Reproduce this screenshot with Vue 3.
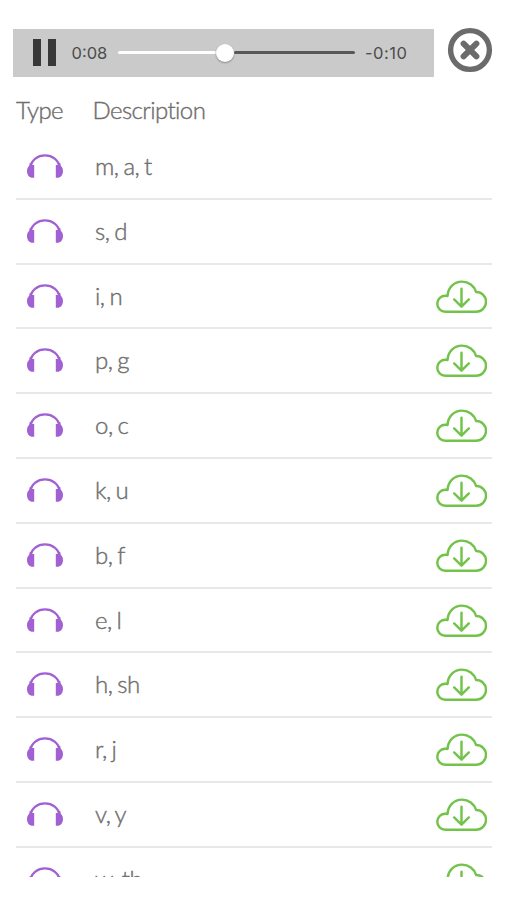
<script setup>
const rows = [
  ['m, a, t', false], ['s, d', false], ['i, n', true], ['p, g', true],
  ['o, c', true], ['k, u', true], ['b, f', true], ['e, l', true],
  ['h, sh', true], ['r, j', true], ['v, y', true], ['w, th', true],
].map(([label, download]) => ({ label, download }))
</script>

<template>
  <main class="screen">
    <header class="top">
      <div class="player">
        <div class="pause"><i></i><i></i></div>
        <span class="time">0:08</span>
        <div class="track"><div class="played"></div><div class="knob"></div><div class="rest"></div></div>
        <span class="time left">-0:10</span>
      </div>
      <svg class="close" viewBox="0 0 46 46">
        <circle cx="23" cy="23" r="19.4" fill="none" stroke="#6b6b6b" stroke-width="5.4" />
        <path d="M16.6 16.6 29.4 29.4M29.4 16.6 16.6 29.4" stroke="#6b6b6b" stroke-width="6" stroke-linecap="round" />
      </svg>
    </header>
    <div class="heads"><span class="type">Type</span><span class="desc">Description</span></div>
    <section class="list">
      <div v-for="row in rows" :key="row.label" class="row">
        <svg class="phones" viewBox="0 0 36 24">
          <path d="M3.500 13C4.500 6 10.500 1.400 18 1.400S31.500 6 32.500 13" fill="none" stroke="#a161d2" stroke-width="2.400" />
          <path d="M7.200 11V23.700H5.500C2.500 23.700 0 21 0 17.200c0-2.400.8-4.100 2.300-5.400l.4-2.800 2.300.3-.2 1.700zM28.800 11V23.700h1.700c3 0 5.500-2.700 5.500-6.500 0-2.400-.8-4.100-2.300-5.400l-.4-2.800-2.300.3.2 1.700z" fill="#a161d2" />
        </svg>
        <span class="label">{{ row.label }}</span>
        <svg v-if="row.download" class="cloud" viewBox="0 0 52 34">
          <path d="M9.500 32C4.800 32 1.300 28.500 1.300 24c0-4.800 4-8.500 8.800-8.200l1.700.1C12.200 7.500 18.500 1.300 26.500 1.300c6.700 0 12.500 4.300 14.500 10.700 5.500-.1 10 4.400 10 10S46.500 32 41 32z" />
          <path d="M26 8.500V26.500M18.500 19.500 26 26.800 33.500 19.500" />
        </svg>
      </div>
    </section>
  </main>
</template>

<style>
body { margin: 0; background: #fff; }
</style>
<style scoped>
.screen { box-sizing: border-box; width: 507px; height: 900px; padding-top: 27px; overflow: hidden; background: #fff; color: #6e6e6e; font: 300 24px/30px Lato, sans-serif; -webkit-text-stroke: .4px #6e6e6e; }
.top { display: flex; height: 50px; padding-left: 13px; -webkit-text-stroke: 0; }
.player { display: flex; align-items: center; width: 421px; height: 47.500px; margin-top: 2px; background: #cacaca; }
.pause { display: flex; gap: 7px; margin-left: 19.500px; width: 23px; height: 27px; }
.pause i { width: 8px; background: #383838; }
.time { width: 36px; margin-left: 16px; color: #4c4c4c; font: 400 16.500px/20px Inter, sans-serif; letter-spacing: 0; white-space: nowrap; }
.time.left { width: 44px; margin-left: 10px; letter-spacing: .5px; }
.track { display: flex; align-items: center; width: 237.500px; margin-left: 10px; }
.played { width: 98px; height: 3px; border-radius: 2px; background: #fff; }
.knob { width: 18px; height: 18px; border-radius: 50%; background: #fff; box-shadow: 0 1px 2px #0005; }
.rest { flex: 1; height: 3px; border-radius: 2px; background: #585858; }
.close { width: 46px; height: 46px; margin: 0 0 0 13px; }
.heads { display: flex; height: 58px; padding: 17.500px 0 0 16px; box-sizing: border-box; }
.type { width: 76.500px; letter-spacing: -.7px; }
.desc { letter-spacing: -.58px; }
.list { height: 742px; margin: 0 15px 0 16px; overflow: hidden; }
.row { display: flex; box-sizing: border-box; height: 64.800px; padding-top: 19px; border-bottom: 2px solid #e8e8e8; }
.phones { width: 36px; height: 24px; margin-left: 11px; }
.label { margin: -3px 0 0 32px; letter-spacing: -.5px; word-spacing: -1.200px; }
.cloud { width: 51px; height: 34px; margin: -4px 5px 0 auto; fill: none; stroke: #72c34a; stroke-width: 2.500; stroke-linecap: round; stroke-linejoin: round; }
</style>
